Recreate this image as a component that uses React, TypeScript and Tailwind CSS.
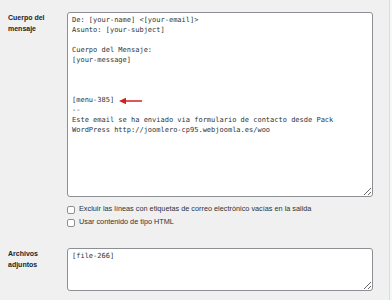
const bodyText = `De: [your-name] <[your-email]>
Asunto: [your-subject]

Cuerpo del Mensaje:
[your-message]



[menu-385]
--
Este email se ha enviado via formulario de contacto desde Pack
WordPress http://joomlero-cp95.webjoomla.es/woo`;

const mono = "font-['Menlo','DejaVu_Sans_Mono',monospace] text-[7px] leading-[10px] text-[#2c3338]";
const label = "w-[67px] shrink-0 pl-2 pt-[1px] font-['Liberation_Sans',Arial,sans-serif] text-[7px] leading-[10.5px] font-bold text-[#1d2327]";

function Check({ text }: { text: string }) {
  return (
    <label className="flex items-center gap-[4px] h-[13px]">
      <span className="w-[8px] h-[8px] rounded-[2px] border border-[#8c8f94] bg-white shrink-0" />
      <span className="font-['Liberation_Sans',Arial,sans-serif] text-[7.3px] text-[#2c3338]">{text}</span>
    </label>
  );
}

export default function App() {
  return (
    <div className="min-h-[300px] bg-[#f0f0f1] flex">
      <div className="w-[389px] shrink-0 pt-3">
        <div className="flex">
          <div className={label}>
            Cuerpo del
            <br />
            mensaje
          </div>
          <div className="w-[306px]">
            <div className="relative">
              <textarea
                className={`${mono} block w-full h-[185px] bg-white border border-[#8c8f94] rounded-[3px] px-[4px] py-[2px] outline-none`}
                defaultValue={bodyText}
                spellCheck={false}
              />
              <svg className="absolute left-[52px] top-[85px]" width="24" height="8" viewBox="0 0 24 8">
                <line x1="5" y1="4" x2="23" y2="4" stroke="#d02020" strokeWidth="1.5" />
                <path d="M0 4 L7 0.8 L7 7.2 Z" fill="#d02020" />
              </svg>
            </div>
            <div className="mt-[6px]">
              <Check text="Excluir las líneas con etiquetas de correo electrónico vacías en la salida" />
              <Check text="Usar contenido de tipo HTML" />
            </div>
          </div>
        </div>
        <div className="flex mt-[19px]">
          <div className={label}>
            Archivos
            <br />
            adjuntos
          </div>
          <div className="w-[306px]">
            <textarea
              className={`${mono} block w-full h-[43px] bg-white border border-[#8c8f94] rounded-[3px] px-[4px] py-[2px] outline-none`}
              defaultValue="[file-266]"
              spellCheck={false}
            />
          </div>
        </div>
      </div>
      <div className="flex-1 border-l border-[#dcdcde] bg-[#f6f7f7]" />
    </div>
  );
}
